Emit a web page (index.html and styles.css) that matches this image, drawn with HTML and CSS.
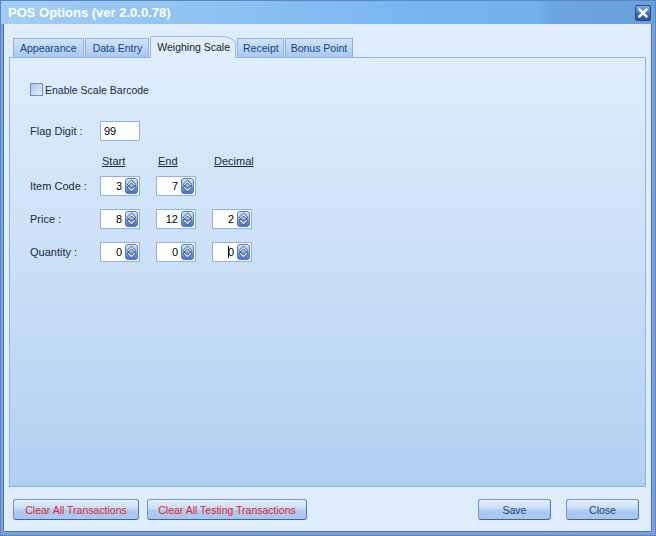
FILE: index.html
```html
<!DOCTYPE html>
<html lang="en">
<head>
<meta charset="utf-8">
<title>POS Options</title>
<link rel="stylesheet" href="styles.css">
</head>
<body>
<svg class="defs" width="0" height="0" aria-hidden="true">
  <defs>
    <linearGradient id="spinGrad" x1="0" y1="0" x2="0" y2="1">
      <stop offset="0" stop-color="#dce8f9"/>
      <stop offset="0.5" stop-color="#a6c2eb"/>
      <stop offset="0.5" stop-color="#7ea3dd"/>
      <stop offset="1" stop-color="#4a74bd"/>
    </linearGradient>
    <symbol id="spin" viewBox="0 0 13 16">
      <rect x="0.5" y="0.5" width="12" height="15" rx="2.5" fill="url(#spinGrad)" stroke="#5479bb"/>
      <path d="M3.5 6.5 6.5 3.5 9.5 6.5" fill="none" stroke="#2b4f94" stroke-width="2.6" stroke-linecap="round" stroke-linejoin="round"/>
      <path d="M3.5 6.5 6.5 3.5 9.5 6.5" fill="none" stroke="#ffffff" stroke-width="1.1" stroke-linecap="round" stroke-linejoin="round"/>
      <path d="M3.5 9.5 6.5 12.5 9.5 9.5" fill="none" stroke="#2b4f94" stroke-width="2.6" stroke-linecap="round" stroke-linejoin="round"/>
      <path d="M3.5 9.5 6.5 12.5 9.5 9.5" fill="none" stroke="#ffffff" stroke-width="1.1" stroke-linecap="round" stroke-linejoin="round"/>
    </symbol>
  </defs>
</svg>

<div class="window">
  <div class="titlebar">
    <span class="title">POS Options (ver 2.0.0.78)</span>
    <span class="close-btn">
      <svg width="10" height="10" viewBox="0 0 10 10"><path d="M1.6 1.6 8.4 8.4 M8.4 1.6 1.6 8.4" stroke="#ffffff" stroke-width="2.4" stroke-linecap="square"/></svg>
    </span>
  </div>

  <div class="client">
    <div class="tabs">
      <div class="tab">Appearance</div>
      <div class="tab tab-wide">Data Entry</div>
      <div class="tab active">Weighing Scale</div>
      <div class="tab tab-narrow">Receipt</div>
      <div class="tab tab-mid">Bonus Point</div>
    </div>

    <div class="panel">
      <div class="check-row">
        <span class="checkbox"></span>
        <span>Enable Scale Barcode</span>
      </div>

      <div class="form-grid flag-row">
        <span class="label">Flag Digit :</span>
        <span class="textbox">99</span>
      </div>

      <div class="form-grid heads">
        <span></span>
        <span class="head">Start</span>
        <span class="head">End</span>
        <span class="head">Decimal</span>
      </div>

      <div class="form-grid rows">
        <span class="label">Item Code :</span>
        <div class="spinner"><span class="spin-val">3</span><svg class="spin-btn" viewBox="0 0 13 16"><use href="#spin"/></svg></div>
        <div class="spinner"><span class="spin-val">7</span><svg class="spin-btn" viewBox="0 0 13 16"><use href="#spin"/></svg></div>
        <span></span>

        <span class="label">Price :</span>
        <div class="spinner"><span class="spin-val">8</span><svg class="spin-btn" viewBox="0 0 13 16"><use href="#spin"/></svg></div>
        <div class="spinner"><span class="spin-val">12</span><svg class="spin-btn" viewBox="0 0 13 16"><use href="#spin"/></svg></div>
        <div class="spinner"><span class="spin-val">2</span><svg class="spin-btn" viewBox="0 0 13 16"><use href="#spin"/></svg></div>

        <span class="label">Quantity :</span>
        <div class="spinner"><span class="spin-val">0</span><svg class="spin-btn" viewBox="0 0 13 16"><use href="#spin"/></svg></div>
        <div class="spinner"><span class="spin-val">0</span><svg class="spin-btn" viewBox="0 0 13 16"><use href="#spin"/></svg></div>
        <div class="spinner"><span class="spin-val"><span class="caret"></span>0</span><svg class="spin-btn" viewBox="0 0 13 16"><use href="#spin"/></svg></div>
      </div>
    </div>

    <div class="footer">
      <div class="btn-group left">
        <button class="btn danger w-clear">Clear All Transactions</button>
        <button class="btn danger w-clear-test">Clear All Testing Transactions</button>
      </div>
      <div class="btn-group right">
        <button class="btn std">Save</button>
        <button class="btn std">Close</button>
      </div>
    </div>
  </div>
</div>
</body>
</html>
```

FILE: styles.css
```css
* {
  box-sizing: border-box;
}

html,
body {
  margin: 0;
  padding: 0;
}

body {
  width: 656px;
  height: 536px;
  overflow: hidden;
  font-family: "Liberation Sans", Arial, sans-serif;
  font-size: 11px;
  color: #1a2a44;
  background: #7ea6e0;
}

.defs {
  position: absolute;
  width: 0;
  height: 0;
  overflow: hidden;
}

.window {
  width: 656px;
  height: 536px;
  border: 1px solid #5a84c4;
  background: #7aa3de;
  padding: 0 4px 4px 3px;
  display: flex;
  flex-direction: column;
}

.titlebar {
  height: 23px;
  margin: 0 -4px 0 -3px;
  padding: 0 4px 0 7px;
  display: flex;
  align-items: center;
  justify-content: space-between;
  background: linear-gradient(to right, #a3cdf4 0%, #90c3f2 30%, #79b6f0 62%, #73b1ee 82%, #6ba6e0 84%, #6aa1d8 100%);
}

.title {
  color: #ffffff;
  font-weight: bold;
  font-size: 13px;
  white-space: nowrap;
}

.close-btn {
  width: 16px;
  height: 16px;
  border: 1px solid #27468f;
  border-radius: 2px;
  background: linear-gradient(#86abe8, #4a72c0 50%, #2b4fa0);
  display: flex;
  align-items: center;
  justify-content: center;
}

.client {
  flex: 1;
  background: #dfecfb;
  display: flex;
  flex-direction: column;
  padding: 0 5px;
  box-shadow: -1px 0 0 #4d74b3, 1px 0 0 #4d74b3, 0 1px 0 #4d74b3;
}

.tabs {
  height: 33px;
  flex: none;
  display: flex;
  align-items: flex-end;
  gap: 1px;
  padding-left: 4px;
}

.tab {
  height: 19px;
  padding: 0 6px;
  display: flex;
  align-items: center;
  border: 1px solid #8eb1e2;
  border-bottom: none;
  background: linear-gradient(#d2e2f8, #aac8ef);
  color: #15428b;
  font-size: 10.5px;
  white-space: nowrap;
}

.tab.tab-wide {
  padding: 0 6px 0 7px;
}

.tab.tab-narrow {
  padding: 0 4px 0 5px;
}

.tab.tab-mid {
  padding: 0 5px;
}

.tab.active {
  height: 22px;
  margin-bottom: -1px;
  padding: 0 5px 1px 6px;
  background: #dfedfc;
  color: #1b1b1b;
  border-color: #9ab9e6;
  border-top-left-radius: 2px;
  border-top-right-radius: 16px 8px;
  position: relative;
  z-index: 1;
}

.panel {
  height: 430px;
  flex: none;
  border: 1px solid #8db2e3;
  background: linear-gradient(#dfedfc, #c8ddf6 55%, #b2cff2);
  padding: 25px 0 0 20px;
}

.check-row {
  height: 13px;
  display: flex;
  align-items: center;
  gap: 2px;
  font-size: 10.5px;
}

.checkbox {
  width: 13px;
  height: 13px;
  flex: none;
  border: 1px solid #6f8dbf;
  background: linear-gradient(135deg, #a7c3eb, #e6f0fc);
}

.form-grid {
  display: grid;
  grid-template-columns: 54px 40px 40px 40px;
  column-gap: 16px;
  align-items: center;
}

.flag-row {
  margin-top: 25px;
}

.label {
  white-space: nowrap;
}

.textbox {
  height: 20px;
  border: 1px solid #8fb2e6;
  background: #ffffff;
  padding-left: 3px;
  display: flex;
  align-items: center;
  color: #000000;
}

.heads {
  margin-top: 14px;
  line-height: 13px;
}

.head {
  padding-left: 2px;
  text-decoration: underline;
  white-space: nowrap;
}

.rows {
  margin-top: 8px;
  row-gap: 13px;
}

.spinner {
  height: 20px;
  border: 1px solid #8fb2e6;
  background: #ffffff;
  display: flex;
  align-items: center;
  padding-right: 1px;
}

.spin-val {
  flex: 1;
  text-align: right;
  padding-right: 3px;
  color: #000000;
}

.caret {
  display: inline-block;
  width: 1px;
  height: 12px;
  background: #000000;
  vertical-align: -2px;
  margin-right: -1px;
}

.spin-btn {
  width: 13px;
  height: 16px;
  flex: none;
  display: block;
}

.footer {
  height: 44px;
  flex: none;
  display: flex;
  justify-content: space-between;
  align-items: flex-start;
  padding: 12px 7px 0 4px;
}

.btn-group {
  display: flex;
}

.btn-group.left {
  gap: 8px;
}

.btn-group.right {
  gap: 15px;
}

.btn {
  height: 21px;
  padding: 0;
  border: 1px solid #7096d0;
  border-bottom-color: #4262a3;
  border-right-color: #5578b8;
  border-radius: 3px;
  background: linear-gradient(#e6effc, #c9dcf6 45%, #b0cbf0 55%, #a8c6ef);
  font-family: "Liberation Sans", Arial, sans-serif;
  font-size: 10.5px;
  white-space: nowrap;
}

.btn.danger {
  color: #e4232e;
}

.btn.std {
  width: 73px;
  color: #1d3e7c;
}

.w-clear {
  width: 126px;
}

.w-clear-test {
  width: 160px;
}
```
